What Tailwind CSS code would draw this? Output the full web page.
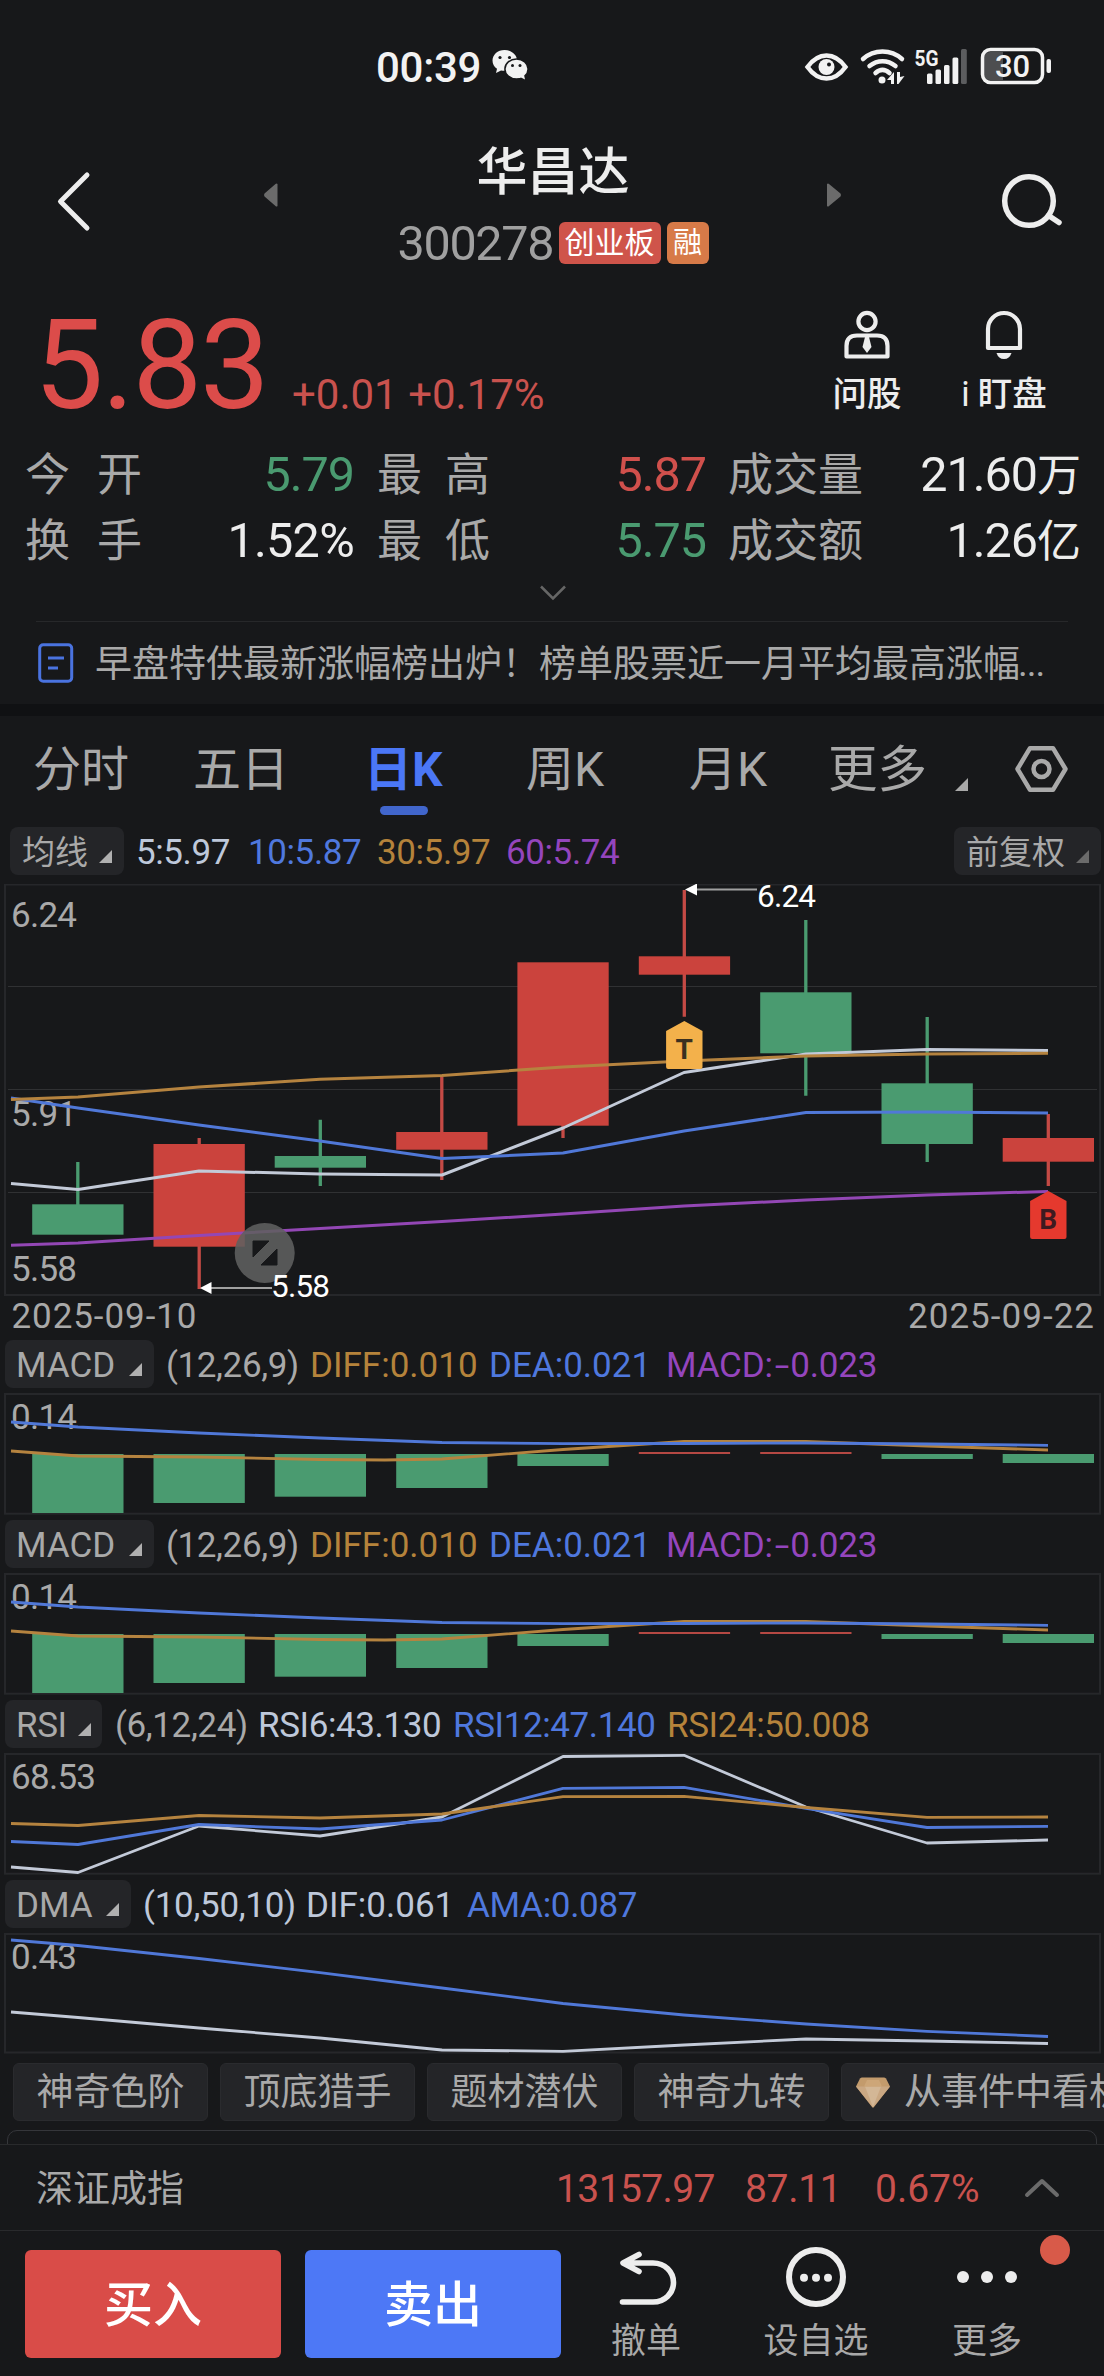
<!DOCTYPE html>
<html lang="zh-CN">
<head>
<meta charset="utf-8">
<title>华昌达 300278</title>
<script src="https://cdn.jsdelivr.net/npm/@tailwindcss/browser@4"></script>
</head>
<body class="w-[1104px] h-[2376px] overflow-hidden bg-[#17181a] text-[#a9a9a9] font-['Roboto','Noto_Sans_CJK_SC',sans-serif] leading-none whitespace-nowrap">
<div class="flex flex-col w-[1104px] h-[2376px]">

  <!-- status bar -->
  <div class="h-[134px] shrink-0 flex items-center text-[#f2f2f2]">
    <div class="ml-[376px] w-[116px] pt-0.5 text-[42px] font-medium tracking-[-0.3px]">00:39</div>
    <svg class="w-9 h-8 shrink-0 -mt-1" viewBox="0 0 36 32">
      <path d="M12.500 1C5.600 1 .5 5.700.5 11.500c0 3.400 1.700 6.300 4.500 8.300L4 24l5-2.600c1.200.3 2.300.4 3.500.4 6.900 0 12.500-4.600 12.500-10.400S19.400 1 12.500 1z" fill="#f2f2f2"/>
      <ellipse cx="24.500" cy="20" rx="11.600" ry="10" fill="#f2f2f2" stroke="#17181a" stroke-width="1.500"/>
      <path d="M28 28l5 2.500-1-4.500z" fill="#f2f2f2"/>
      <g fill="#17181a"><circle cx="8" cy="8.500" r="1.600"/><circle cx="17.500" cy="8.500" r="1.600"/><circle cx="20.500" cy="16.500" r="1.500"/><circle cx="28" cy="16.500" r="1.500"/></g>
    </svg>
    <svg class="ml-[276px] w-[250px] h-10 shrink-0 -mt-0.5" viewBox="804 46 250 40">
      <path d="M807.500 67c5-7 12-11.500 19-11.500s14 4.500 19 11.500c-5 7-12 11.500-19 11.500s-14-4.500-19-11.500z" fill="none" stroke="#f2f2f2" stroke-width="4.500"/>
      <circle cx="826.500" cy="67" r="8" fill="#f2f2f2"/><circle cx="829" cy="64.500" r="2" fill="#17181a"/>
      <g fill="none" stroke="#f2f2f2" stroke-width="4.500" stroke-linecap="round">
        <path d="M863 59c11-10 28-10 39 0"/><path d="M869.500 66c8-6.500 18-6.500 26 0"/><path d="M875.500 73c4.500-4 9.500-4 14 0"/>
      </g>
      <circle cx="882" cy="80" r="3.500" fill="#f2f2f2"/>
      <path d="M887 80l7-8v12h-3v-4zM897 72h3v5l4.500-1-6 8h-1.500z" fill="#f2f2f2"/>
      <text x="914.500" y="66" font-size="22" font-weight="700" textLength="24" lengthAdjust="spacingAndGlyphs" fill="#f2f2f2">5G</text>
      <g fill="#f2f2f2"><rect x="927" y="73.500" width="5.500" height="10.500" rx="1.500"/><rect x="935.500" y="69.500" width="5.500" height="14.500" rx="1.500"/><rect x="944" y="65" width="5.500" height="19" rx="1.500"/><rect x="952.500" y="57.500" width="5.800" height="26.500" rx="1.500"/></g>
      <rect x="961" y="49" width="5.800" height="35" rx="1.500" fill="#5c5d5f"/>
      <path d="M990 52h13v28h-13q-6 0-6-6v-16q0-6 6-6z" fill="#4d4e50"/>
      <rect x="982.500" y="49.500" width="60" height="33" rx="8" fill="none" stroke="#f2f2f2" stroke-width="3.500"/>
      <rect x="1046.500" y="59" width="4.500" height="14" rx="2" fill="#f2f2f2"/>
      <text x="995" y="77" font-size="31" font-weight="500" textLength="35" fill="#f2f2f2">30</text>
    </svg>
  </div>

  <!-- title bar -->
  <div class="h-[156px] shrink-0 flex">
    <svg class="w-[110px] h-[134px] shrink-0" viewBox="0 134 110 134"><path d="M87 175L60.500 201.500 87 228" fill="none" stroke="#ededed" stroke-width="5" stroke-linecap="round" stroke-linejoin="round"/></svg>
    <svg class="ml-[152px] mt-[49px] w-4 h-6 shrink-0" viewBox="0 0 16 24"><path d="M15.500 1v22q-1 1-2 0L2.500 13.500q-1-1.500 0-3L13.500 1q1-1 2 0z" fill="#6b6b6b"/></svg>
    <div class="ml-[62px] w-[426px] flex flex-col items-center pt-[13px]">
      <div class="text-[51px] leading-[52px] font-medium text-[#ededed]">华昌达</div>
      <div class="mt-[23px] h-[42px] flex items-center">
        <span class="pt-0.5 text-[48.500px] tracking-[-1.300px] text-[#a0a0a0] w-[161px]">300278</span>
        <span class="h-[42px] w-[102px] rounded-md bg-[#cf544a] text-white text-[30px] leading-[42px] text-center">创业板</span>
        <span class="ml-1.5 h-[42px] w-[42px] rounded-md bg-[#d77a48] text-white text-[29px] leading-[42px] text-center">融</span>
      </div>
    </div>
    <svg class="ml-[60px] mt-[49px] w-4 h-6 shrink-0" viewBox="0 0 16 24"><path d="M1 1v22q1 1 2 0L14.500 13.500q1-1.500 0-3L3 1q-1-1-2 0z" fill="#6b6b6b"/></svg>
    <svg class="ml-[152px] mt-9 w-[70px] h-[66px] shrink-0" viewBox="994 170 70 66"><g fill="none" stroke="#ededed" stroke-width="5.500" stroke-linecap="round"><circle cx="1029" cy="201" r="24.300"/><path d="M1048.500 215.500l10.500 7"/></g></svg>
  </div>

  <!-- price -->
  <div class="h-[140px] shrink-0 flex">
    <div class="pl-[34px] w-[292px] pt-[14px] text-[124px] tracking-[-2px] text-[#dc4c4a]">5.83</div>
    <div class="pt-[84px] w-[540px] text-[42px] text-[#c9524e]">+0.01 +0.17%</div>
    <div class="w-[70px] pt-5 flex flex-col items-center text-[#ededed]">
      <svg class="w-12 h-[50px]" viewBox="0 0 48 50"><g fill="none" stroke="#ededed" stroke-width="4.200"><circle cx="24" cy="11.500" r="8.600"/><path d="M3.500 46.500V36Q3.500 25.500 14 25.500h20Q44.500 25.500 44.500 36v10.500z" stroke-linejoin="round"/></g><path d="M22 27h4l2.500 10-4.500 6-4.500-6z" fill="#ededed"/></svg>
      <div class="mt-[16px] text-[34.500px] leading-[36px] font-medium">问股</div>
    </div>
    <div class="ml-[57px] w-[90px] pt-5 flex flex-col items-center text-[#ededed]">
      <svg class="w-12 h-[50px]" viewBox="0 0 48 50"><path d="M8 38V19a16 16 0 0 1 32 0v19z" fill="none" stroke="#ededed" stroke-width="4.200" stroke-linejoin="round"/><path d="M16.500 43h15q-2 6-7.500 6t-7.500-6z" fill="#ededed"/></svg>
      <div class="mt-[16px] text-[34.500px] leading-[36px] font-medium"><span class="mr-2 font-normal">i</span>盯盘</div>
    </div>
  </div>

  <!-- key figures -->
  <div class="h-[191px] shrink-0 pl-[25px] pr-[23px] pt-[12px]">
    <div class="h-[66px] flex items-center text-[45px]">
      <span class="w-[117px] flex justify-between"><span>今</span><span>开</span></span>
      <span class="w-[212px] text-right text-[48.500px] tracking-[-1px] text-[#4a9a70]">5.79</span>
      <span class="ml-[23px] w-[113px] flex justify-between"><span>最</span><span>高</span></span>
      <span class="w-[216px] text-right text-[48.500px] tracking-[-1px] text-[#d0504c]">5.87</span>
      <span class="ml-[22px] w-[135px]">成交量</span>
      <span class="flex-1 text-right text-[#ededed]"><span class="text-[48.500px] tracking-[-1px]">21.60</span><span class="text-[44px]">万</span></span>
    </div>
    <div class="h-[66px] flex items-center text-[45px]">
      <span class="w-[117px] flex justify-between"><span>换</span><span>手</span></span>
      <span class="w-[212px] text-right text-[48.500px] tracking-[-0.700px] text-[#ededed]">1.52%</span>
      <span class="ml-[23px] w-[113px] flex justify-between"><span>最</span><span>低</span></span>
      <span class="w-[216px] text-right text-[48.500px] tracking-[-1px] text-[#4a9a70]">5.75</span>
      <span class="ml-[22px] w-[135px]">成交额</span>
      <span class="flex-1 text-right text-[#ededed]"><span class="text-[48.500px] tracking-[-1px]">1.26</span><span class="text-[44px]">亿</span></span>
    </div>
    <svg class="mx-auto mt-[11px] w-7 h-4" viewBox="0 0 28 16"><path d="M2 1.500L14 13.500 26 1.500" fill="none" stroke="#666" stroke-width="2.500"/></svg>
  </div>

  <!-- notice -->
  <div class="h-[83px] shrink-0 mx-9 border-t border-[#27282a] flex items-center text-[37px]">
    <svg class="w-9 h-10 shrink-0 ml-0.5" viewBox="0 0 36 40"><rect x="1.700" y="1.700" width="32" height="36.500" rx="3.500" fill="none" stroke="#4a73e0" stroke-width="3"/><path d="M10 15h16M10 25h10" stroke="#4a73e0" stroke-width="3"/></svg>
    <span class="ml-[21px] pt-0.5">早盘特供最新涨幅榜出炉！榜单股票近一月平均最高涨幅</span><span class="-ml-0.5 tracking-[-1px]">...</span>
  </div>
  <div class="h-3 shrink-0 bg-[#101113]"></div>

  <!-- period tabs -->
  <div class="h-[104px] shrink-0 flex pt-[30px] text-[48px] leading-[48px]">
    <span class="ml-[33px] w-[160px]">分时</span>
    <span class="w-[171px]">五日</span>
    <div class="w-[162px] flex flex-col text-[#4b77f6] font-bold"><span>日K</span><span class="mt-[12px] ml-[16px] w-12 h-[9px] rounded-full bg-[#4166cc]"></span></div>
    <span class="w-[163px]">周K</span>
    <span class="w-[139px]">月K</span>
    <span class="w-[127px] text-[49.500px]">更多</span>
    <svg class="mt-[32px] w-[13px] h-[13px]" viewBox="0 0 13 13"><path d="M13 0v13H0z" fill="#a9a9a9"/></svg>
    <svg class="-mt-px ml-[47px] w-[53px] h-12" viewBox="0 0 53 48"><g fill="none" stroke="#a9a9a9" stroke-width="4.500" stroke-linejoin="round"><path d="M15 3.200h23L50.500 24 38 44.800H15L2.500 24z"/><circle cx="26.500" cy="24" r="8"/></g></svg>
  </div>

  <!-- moving averages -->
  <div class="h-[64px] shrink-0 pt-[7px] pl-2.5 pr-[3px] flex">
    <div class="w-[114px] h-12 rounded-lg bg-[#242528] flex items-center pl-3 text-[33px]"><span class="pt-0.5">均线</span><svg class="ml-[11px] mt-2.5 w-[13px] h-[13px]" viewBox="0 0 13 13"><path d="M13 0v13H0z" fill="#b0b0b0"/></svg></div>
    <div class="ml-3 h-[51px] flex items-center text-[35px] tracking-[-0.400px]">
      <span class="w-[112px] text-[#bec8da]">5:5.97</span><span class="w-[129px] text-[#4f78de]">10:5.87</span><span class="w-[129px] text-[#b5833b]">30:5.97</span><span class="w-[129px] text-[#9445bd]">60:5.74</span>
    </div>
    <div class="ml-auto w-[147px] h-12 rounded-lg bg-[#242528] flex items-center pl-3 text-[33px]"><span class="pt-0.5">前复权</span><svg class="ml-[11px] mt-2.5 w-[13px] h-[13px]" viewBox="0 0 13 13"><path d="M13 0v13H0z" fill="#6b6b6b"/></svg></div>
  </div>

  <!-- candlestick chart -->
  <svg class="w-[1104px] h-[456px] shrink-0" viewBox="0 884 1104 456">
    <rect x="5" y="884.500" width="1095" height="410.500" fill="none" stroke="#26272a" stroke-width="2"/>
    <path d="M8 986.500H1097M8 1089.500H1097M8 1192.500H1097" stroke="#303133" stroke-width="1.200"/>
    <g stroke="#4a9b70" stroke-width="3.300"><path d="M77.800 1162V1206M320.300 1119.700V1186M805.800 920V1095.700M927.200 1017V1162"/></g>
    <g stroke="#c44a45" stroke-width="3.300"><path d="M199.200 1138V1289M441.800 1076.700V1180M563 1120V1138M684.300 890V1016.700M1048.300 1114V1186"/></g>
    <g fill="#4a9b70">
      <rect x="32.200" y="1204.300" width="91.300" height="30.400"/><rect x="274.700" y="1156" width="91.300" height="11.700"/>
      <rect x="760.200" y="992.300" width="91.300" height="61"/><rect x="881.500" y="1083.300" width="91.300" height="60.700"/>
    </g>
    <g fill="#cb433d">
      <rect x="153.500" y="1144" width="91.300" height="102.700"/><rect x="396.200" y="1132" width="91.300" height="17.700"/>
      <rect x="517.400" y="962.300" width="91.300" height="163.400"/><rect x="638.800" y="956.300" width="91.300" height="18.400"/>
      <rect x="1002.700" y="1138" width="91.300" height="23.700"/>
    </g>
    <g font-size="35" fill="#a9a9a9">
      <text x="11" y="927" textLength="66">6.24</text><text x="11" y="1126" textLength="66">5.91</text><text x="11" y="1281" textLength="66">5.58</text>
      <text x="11.500" y="1327.800" textLength="185">2025-09-10</text><text x="908" y="1327.800" textLength="186">2025-09-22</text>
    </g>
    <g fill="none" stroke-width="3" stroke-linejoin="round">
      <path stroke="#c3cad8" d="M11 1183.500L78 1189.500 199 1171 320 1174 442 1175 563 1128 684 1072.500 806 1054 927 1049.500 1048 1050.500"/>
      <path stroke="#5078d8" d="M11 1098L78 1108 199 1125 320 1141 442 1158.500 563 1153 684 1131 806 1112.500 927 1112 1048 1113"/>
      <path stroke="#b5833f" d="M11 1099.500L78 1097 199 1087 320 1079.300 442 1075.500 563 1067 684 1061 806 1056 927 1054 1048 1053.300"/>
      <path stroke="#9347b5" d="M11 1245.300L78 1243 199 1235.500 320 1228.500 442 1221.500 563 1214 684 1206 806 1200 927 1195 1048 1191.500"/>
    </g>
    <path d="M684.300 1021l18.200 10v36q0 2-2 2h-32.400q-2 0-2-2v-36z" fill="#f3b14b"/>
    <path d="M1048.300 1191l18.200 10v36q0 2-2 2h-32.400q-2 0-2-2v-36z" fill="#e5392e"/>
    <g font-size="28" font-weight="700" text-anchor="middle"><text x="684.300" y="1058.500" fill="#3a3020">T</text><text x="1048.300" y="1228.500" fill="#3d1a20">B</text></g>
    <circle cx="264.700" cy="1253" r="30" fill="#606060" fill-opacity=".88"/>
    <path d="M253 1241h16l-16 16zM277 1249v16h-16z" fill="#17181a" stroke="#17181a" stroke-linejoin="round"/>
    <path d="M697 889.500H757M211 1288H272" stroke="#a0a0a0" stroke-width="1.800"/>
    <path d="M685 889.500l12-6v12zM200 1288l11.500-6v12z" fill="#fff"/>
    <g font-size="31.500" fill="#fff"><text x="757" y="906.500" textLength="59">6.24</text><text x="271" y="1296.500" textLength="59">5.58</text></g>
  </svg>

  <!-- MACD, first pane -->
  <div class="h-[180px] shrink-0">
    <div class="h-12 pl-[5px] flex items-center text-[35px]">
      <div class="w-[149px] h-12 rounded-lg bg-[#242528] flex items-center pl-[11px] mr-3"><span class="w-[113px] pt-0.5">MACD</span><svg class="mt-2.5 w-[13px] h-[13px]" viewBox="0 0 13 13"><path d="M13 0v13H0z" fill="#b0b0b0"/></svg></div>
      <span class="w-[144px] pt-0.5 tracking-[-0.400px]">(12,26,9)</span><span class="w-[179px] pt-0.5 text-[#b5833b]">DIFF:0.010</span><span class="w-[177px] pt-0.5 text-[#4f78de]">DEA:0.021</span><span class="pt-0.5 tracking-[-0.200px] text-[#9445bd]">MACD:<span class="inline-block scale-x-[1.5] mx-1">-</span>0.023</span>
    </div>
    <svg class="w-[1104px] h-[132px]" viewBox="0 1388 1104 132">
      <rect x="5" y="1394" width="1095" height="119.700" fill="none" stroke="#26272a" stroke-width="2"/>
      <g fill="#4a9b70"><rect x="32.200" y="1454" width="91.300" height="59"/><rect x="153.500" y="1454" width="91.300" height="49"/><rect x="274.700" y="1454" width="91.300" height="42.700"/><rect x="396.200" y="1454" width="91.300" height="34"/><rect x="517.400" y="1454" width="91.300" height="12"/><rect x="881.500" y="1454" width="91.300" height="5"/><rect x="1002.700" y="1454" width="91.300" height="9"/></g>
      <path d="M638.800 1453h91.300M760.200 1453h91.300" stroke="#b54843" stroke-width="2"/>
      <text x="11" y="1428.700" font-size="35" textLength="66" fill="#a9a9a9">0.14</text>
      <g fill="none" stroke-width="2.800" stroke-linejoin="round">
        <path stroke="#b5833f" d="M11 1451L78 1456 199 1457 320 1459.500 385 1460 442 1459 563 1449.500 684 1441.500 806 1441.500 927 1446 1048 1450"/>
        <path stroke="#5078d8" d="M11 1422L78 1427 199 1433 320 1438 442 1442.500 563 1443.700 684 1443.500 806 1443 927 1444 1048 1445.300"/>
      </g>
    </svg>
  </div>

  <!-- MACD, second pane -->
  <div class="h-[180px] shrink-0">
    <div class="h-12 pl-[5px] flex items-center text-[35px]">
      <div class="w-[149px] h-12 rounded-lg bg-[#242528] flex items-center pl-[11px] mr-3"><span class="w-[113px] pt-0.5">MACD</span><svg class="mt-2.5 w-[13px] h-[13px]" viewBox="0 0 13 13"><path d="M13 0v13H0z" fill="#b0b0b0"/></svg></div>
      <span class="w-[144px] pt-0.5 tracking-[-0.400px]">(12,26,9)</span><span class="w-[179px] pt-0.5 text-[#b5833b]">DIFF:0.010</span><span class="w-[177px] pt-0.5 text-[#4f78de]">DEA:0.021</span><span class="pt-0.5 tracking-[-0.200px] text-[#9445bd]">MACD:<span class="inline-block scale-x-[1.5] mx-1">-</span>0.023</span>
    </div>
    <svg class="w-[1104px] h-[132px]" viewBox="0 1388 1104 132">
      <rect x="5" y="1394" width="1095" height="119.700" fill="none" stroke="#26272a" stroke-width="2"/>
      <g fill="#4a9b70"><rect x="32.200" y="1454" width="91.300" height="59"/><rect x="153.500" y="1454" width="91.300" height="49"/><rect x="274.700" y="1454" width="91.300" height="42.700"/><rect x="396.200" y="1454" width="91.300" height="34"/><rect x="517.400" y="1454" width="91.300" height="12"/><rect x="881.500" y="1454" width="91.300" height="5"/><rect x="1002.700" y="1454" width="91.300" height="9"/></g>
      <path d="M638.800 1453h91.300M760.200 1453h91.300" stroke="#b54843" stroke-width="2"/>
      <text x="11" y="1428.700" font-size="35" textLength="66" fill="#a9a9a9">0.14</text>
      <g fill="none" stroke-width="2.800" stroke-linejoin="round">
        <path stroke="#b5833f" d="M11 1451L78 1456 199 1457 320 1459.500 385 1460 442 1459 563 1449.500 684 1441.500 806 1441.500 927 1446 1048 1450"/>
        <path stroke="#5078d8" d="M11 1422L78 1427 199 1433 320 1438 442 1442.500 563 1443.700 684 1443.500 806 1443 927 1444 1048 1445.300"/>
      </g>
    </svg>
  </div>

  <!-- RSI -->
  <div class="h-[180px] shrink-0">
    <div class="h-12 pl-[5px] flex items-center text-[35px] tracking-[-0.400px]">
      <div class="w-[97px] h-12 rounded-lg bg-[#242528] flex items-center pl-[11px] mr-[13px]"><span class="w-[62px] pt-0.5">RSI</span><svg class="mt-2.5 w-[13px] h-[13px]" viewBox="0 0 13 13"><path d="M13 0v13H0z" fill="#b0b0b0"/></svg></div>
      <span class="w-[143px] pt-0.5">(6,12,24)</span><span class="w-[195px] pt-0.5 text-[#bec8da]">RSI6:43.130</span><span class="w-[214px] pt-0.5 text-[#4f78de]">RSI12:47.140</span><span class="pt-0.5 text-[#b5833b]">RSI24:50.008</span>
    </div>
    <svg class="w-[1104px] h-[132px]" viewBox="0 1748 1104 132">
      <rect x="5" y="1754" width="1095" height="119.700" fill="none" stroke="#26272a" stroke-width="2"/>
      <text x="11" y="1788.700" font-size="35" textLength="85" fill="#a9a9a9">68.53</text>
      <g fill="none" stroke-width="2.800" stroke-linejoin="round">
        <path stroke="#c3cad8" d="M11 1867L78 1872.500 199 1826 320 1836 442 1817 563 1756.500 684 1755.300 806 1807 927 1843 1048 1840"/>
        <path stroke="#5078d8" d="M11 1841.500L78 1844.500 199 1824.500 320 1829 442 1820 563 1788.300 684 1787.300 806 1808.300 927 1827.500 1048 1826.300"/>
        <path stroke="#b5833f" d="M11 1823.500L78 1825.500 199 1815.500 320 1818 442 1814 563 1796.700 684 1796.300 806 1807.500 927 1817.300 1048 1817"/>
      </g>
    </svg>
  </div>

  <!-- DMA -->
  <div class="h-[183px] shrink-0">
    <div class="h-12 pl-[5px] flex items-center text-[35px] tracking-[-0.300px]">
      <div class="w-[126px] h-12 rounded-lg bg-[#242528] flex items-center pl-[11px] mr-3"><span class="w-[90px] pt-0.5 tracking-normal">DMA</span><svg class="mt-2.5 w-[13px] h-[13px]" viewBox="0 0 13 13"><path d="M13 0v13H0z" fill="#b0b0b0"/></svg></div>
      <span class="w-[163px] pt-0.5 text-[#bec8da]">(10,50,10)</span><span class="w-[161px] pt-0.5 tracking-normal text-[#bec8da]">DIF:0.061</span><span class="pt-0.5 text-[#4f78de]">AMA:0.087</span>
    </div>
    <svg class="w-[1104px] h-[132px]" viewBox="0 1928 1104 132">
      <rect x="5" y="1934" width="1095" height="118.500" fill="none" stroke="#26272a" stroke-width="2"/>
      <text x="11" y="1968.700" font-size="35" textLength="66" fill="#a9a9a9">0.43</text>
      <g fill="none" stroke-width="2.800" stroke-linejoin="round">
        <path stroke="#c3cad8" d="M11 2012L78 2017.500 199 2028 320 2038 442 2050 563 2051.300 684 2045 806 2039 927 2041 1048 2043.500"/>
        <path stroke="#5078d8" d="M11 1940L78 1945.500 199 1958.500 320 1972.700 442 1988 563 2003.500 684 2015 806 2024 927 2031.300 1048 2036.500"/>
      </g>
    </svg>
  </div>

  <!-- feature chips -->
  <div class="h-[58px] shrink-0 pl-[13px] flex gap-3 text-[37px] leading-[58px] text-center overflow-hidden">
    <span class="w-[195px] shrink-0 rounded-md bg-[#242528] border border-[#2a2b2e]">神奇色阶</span>
    <span class="w-[195px] shrink-0 rounded-md bg-[#242528] border border-[#2a2b2e]">顶底猎手</span>
    <span class="w-[195px] shrink-0 rounded-md bg-[#242528] border border-[#2a2b2e]">题材潜伏</span>
    <span class="w-[195px] shrink-0 rounded-md bg-[#242528] border border-[#2a2b2e]">神奇九转</span>
    <span class="w-[360px] shrink-0 rounded-md bg-[#242528] border border-[#2a2b2e] flex items-center pl-3.5">
      <svg class="w-[34px] h-[31px] mr-3.5" viewBox="0 0 34 31"><path d="M6 .5h22q1 0 2 1l4 8L18 30q-1 1-2 0L0 9.500l4-8q1-1 2-1z" fill="#c39b6c"/><path d="M0 9.500h34L17 30.500z" fill="#caa883"/><path d="M9 9.500h16L17 30z" fill="#d3b796"/><path d="M11 3h12l3 6.500H8z" fill="#cda678"/></svg>
      <span class="pt-0.5">从事件中看机会</span>
    </span>
  </div>
  <div class="h-[23px] shrink-0 pt-[9px] px-[7px] overflow-hidden"><div class="h-8 rounded-[10px] border border-[#35363a]"></div></div>

  <!-- index strip -->
  <div class="h-[87px] shrink-0 border-y border-[#292a2c] pl-9 pt-[3px] flex items-center">
    <span class="w-[520px] text-[37px]">深证成指</span>
    <span class="w-[189px] text-[39px] tracking-[-0.600px] text-[#c9524e]">13157.97</span>
    <span class="w-[130px] text-[39px] tracking-[-0.300px] text-[#c9524e]">87.11</span>
    <span class="w-[149px] text-[39px] text-[#c9524e]">0.67%</span>
    <svg class="-mt-[3px] w-9 h-5" viewBox="0 0 36 20"><path d="M3 17L18 3 33 17" fill="none" stroke="#6b6b6b" stroke-width="4" stroke-linecap="round" stroke-linejoin="round"/></svg>
  </div>

  <!-- trade bar -->
  <div class="flex-1 flex pt-[19px] pl-[25px]">
    <div class="w-64 h-[108px] rounded-md bg-[#d94c48] text-white text-[49px] leading-[112px] font-medium text-center">买入</div>
    <div class="ml-6 w-64 h-[108px] rounded-md bg-[#4d78f6] text-white text-[49px] leading-[112px] font-medium text-center">卖出</div>
    <div class="ml-[45px] w-20 flex flex-col items-center text-[35px]">
      <svg class="w-[60px] h-[56px] ml-1" viewBox="617 2249 60 56"><path d="M638 2253.500L622 2262l16 8.500M623 2262h29c12 0 20.500 9 20.500 19.500s-8.500 19.500-20.500 19.500h-30.500" fill="none" stroke="#ededed" stroke-width="5.600" stroke-linecap="round" stroke-linejoin="round"/></svg>
      <span class="mt-[18px]">撤单</span>
    </div>
    <div class="ml-[70px] w-[120px] flex flex-col items-center text-[35px]">
      <svg class="w-[60px] h-[60px] -mt-[3px]" viewBox="0 0 60 60"><circle cx="30" cy="30" r="27" fill="none" stroke="#ededed" stroke-width="6"/><g fill="#ededed"><circle cx="18" cy="30.700" r="4"/><circle cx="30" cy="30.700" r="4"/><circle cx="42" cy="30.700" r="4"/></g></svg>
      <span class="mt-[17px]">设自选</span>
    </div>
    <div class="relative ml-[71px] w-20 flex flex-col items-center text-[35px]">
      <svg class="w-[60px] h-[60px] -mt-[3px]" viewBox="0 0 60 60"><g fill="#ededed"><circle cx="6" cy="30" r="6"/><circle cx="30" cy="30" r="6"/><circle cx="54" cy="30" r="6"/></g></svg>
      <span class="mt-[17px]">更多</span>
      <span class="absolute left-[93px] -top-[15px] w-[30px] h-[30px] rounded-full bg-[#d85a49]"></span>
    </div>
  </div>
</div>
</body>
</html>
